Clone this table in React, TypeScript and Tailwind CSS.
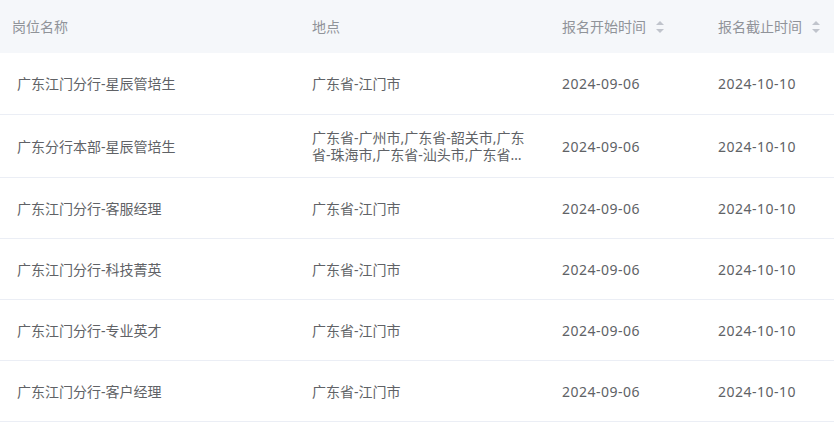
import React from 'react';

type Job = {
  name: string;
  location: string;
  start: string;
  end: string;
  h: string;
};

const jobs: Job[] = [
  { name: '广东江门分行-星辰管培生', location: '广东省-江门市', start: '2024-09-06', end: '2024-10-10', h: 'h-[62px]' },
  {
    name: '广东分行本部-星辰管培生',
    location: '广东省-广州市,广东省-韶关市,广东省-珠海市,广东省-汕头市,广东省-佛山市,广东省-江门市',
    start: '2024-09-06',
    end: '2024-10-10',
    h: 'h-[63px]',
  },
  { name: '广东江门分行-客服经理', location: '广东省-江门市', start: '2024-09-06', end: '2024-10-10', h: 'h-[61px]' },
  { name: '广东江门分行-科技菁英', location: '广东省-江门市', start: '2024-09-06', end: '2024-10-10', h: 'h-[61px]' },
  { name: '广东江门分行-专业英才', location: '广东省-江门市', start: '2024-09-06', end: '2024-10-10', h: 'h-[61px]' },
  { name: '广东江门分行-客户经理', location: '广东省-江门市', start: '2024-09-06', end: '2024-10-10', h: 'h-[61px]' },
];

const SortIcon = () => (
  <span className="ml-[10px] inline-flex h-[12px] w-[8px] flex-col items-center justify-between">
    <span className="h-0 w-0 border-x-[4px] border-b-[4px] border-x-transparent border-b-[#c0c4cc]" />
    <span className="h-0 w-0 border-x-[4px] border-t-[4px] border-x-transparent border-t-[#c0c4cc]" />
  </span>
);

const cols = 'grid grid-cols-[300px_250px_156px_1fr]';

export default function App() {
  return (
    <div
      className="w-[834px] bg-white text-[14px]"
      style={{ fontFamily: '"Noto Sans", "Noto Sans CJK SC", sans-serif' }}
    >
      {/* header */}
      <div className={`${cols} h-[53px] items-center bg-[#f5f7fa] text-[#909399]`}>
        <div className="pl-3">岗位名称</div>
        <div className="pl-3">地点</div>
        <div className="flex items-center pl-3">
          报名开始时间
          <SortIcon />
        </div>
        <div className="flex items-center pl-3">
          报名截止时间
          <SortIcon />
        </div>
      </div>

      {jobs.map((job) => (
        <div key={job.name} className={`${cols} ${job.h} items-center border-b border-[#ebeef5] text-[#606266]`}>
          <div className="pl-[17px]">{job.name}</div>
          <div className="pl-3 pr-[25px]">
            <div className="line-clamp-2 leading-[17px]">{job.location}</div>
          </div>
          <div className="pl-3 tracking-[0.5px]">{job.start}</div>
          <div className="pl-3 tracking-[0.5px]">{job.end}</div>
        </div>
      ))}
    </div>
  );
}
